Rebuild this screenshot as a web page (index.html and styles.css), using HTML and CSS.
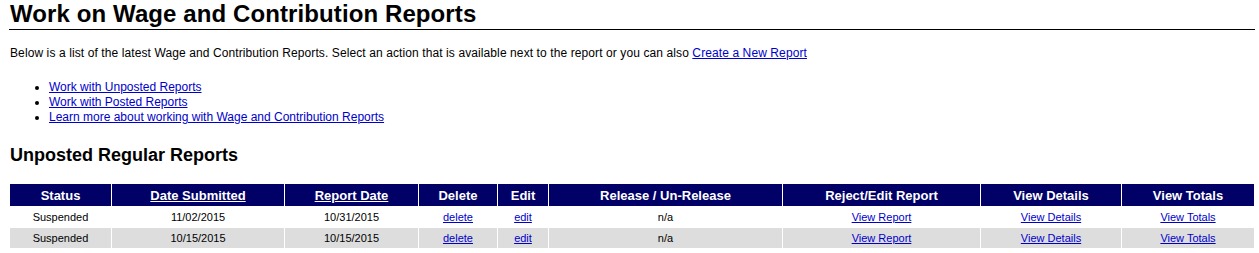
FILE: index.html
```html
<!DOCTYPE html>
<html lang="en">

<head>
    <meta charset="UTF-8">
    <title>Work on Wage and Contribution Reports</title>
    <link rel="stylesheet" href="styles.css">
</head>

<body>
    <h1 class="page-title">Work on Wage and Contribution Reports</h1>
    <p class="intro">Below is a list of the latest Wage and Contribution Reports. Select an action that is available next to the report or you can also <a href="#">Create a New Report</a></p>

    <ul class="links">
        <li><a href="#">Work with Unposted Reports</a></li>
        <li><a href="#">Work with Posted Reports</a></li>
        <li><a href="#">Learn more about working with Wage and Contribution Reports</a></li>
    </ul>

    <h2 class="section-title">Unposted Regular Reports</h2>

    <table class="reports">
        <colgroup>
            <col class="c-status">
            <col class="c-submitted">
            <col class="c-date">
            <col class="c-delete">
            <col class="c-edit">
            <col class="c-release">
            <col class="c-reject">
            <col class="c-details">
            <col class="c-totals">
        </colgroup>
        <thead>
            <tr>
                <th>Status</th>
                <th><a href="#">Date Submitted</a></th>
                <th><a href="#">Report Date</a></th>
                <th>Delete</th>
                <th>Edit</th>
                <th>Release / Un-Release</th>
                <th>Reject/Edit Report</th>
                <th>View Details</th>
                <th>View Totals</th>
            </tr>
        </thead>
        <tbody>
            <tr>
                <td>Suspended</td>
                <td>11/02/2015</td>
                <td>10/31/2015</td>
                <td><a href="#">delete</a></td>
                <td><a href="#">edit</a></td>
                <td>n/a</td>
                <td><a href="#">View Report</a></td>
                <td><a href="#">View Details</a></td>
                <td><a href="#">View Totals</a></td>
            </tr>
            <tr class="alt">
                <td>Suspended</td>
                <td>10/15/2015</td>
                <td>10/15/2015</td>
                <td><a href="#">delete</a></td>
                <td><a href="#">edit</a></td>
                <td>n/a</td>
                <td><a href="#">View Report</a></td>
                <td><a href="#">View Details</a></td>
                <td><a href="#">View Totals</a></td>
            </tr>
        </tbody>
    </table>
</body>

</html>
```

FILE: styles.css
```css
* {
    box-sizing: border-box;
}

body {
    margin: 0;
    padding: 0 4px 0 9px;
    font: 12px "Liberation Sans", Arial, sans-serif;
    color: #000;
    background: #fff;
}

a {
    color: #0000cc;
}

.page-title {
    margin: 0;
    padding: 0 0 1px 1px;
    font-size: 24px;
    font-weight: bold;
    line-height: 28px;
    letter-spacing: 0.1px;
    border-bottom: 1px solid #000;
}

.intro {
    margin: 16px 0 0 1px;
    line-height: 14px;
    letter-spacing: 0.1px;
}

.links {
    margin: 20px 0 0;
    padding-left: 40px;
    line-height: 15px;
}

.section-title {
    margin: 20px 0 0 1px;
    font-size: 18px;
    font-weight: bold;
    line-height: 21px;
}

.reports {
    width: 100%;
    margin-top: 17px;
    table-layout: fixed;
    border-collapse: separate;
    border-spacing: 1px;
    font-size: 11px;
}

.c-status { width: 101px; }
.c-submitted { width: 172px; }
.c-date { width: 133px; }
.c-delete { width: 78px; }
.c-edit { width: 50px; }
.c-release { width: 233px; }
.c-reject { width: 197px; }
.c-details { width: 140px; }
.c-totals { width: 132px; }

.reports th {
    height: 22px;
    padding: 0;
    background: #000066;
    color: #fff;
    font-size: 13px;
    font-weight: bold;
    text-align: center;
}

.reports th a {
    color: #fff;
}

.reports td {
    height: 20px;
    padding: 0;
    text-align: center;
}

.reports tr.alt td {
    background: #dddddd;
}
```
